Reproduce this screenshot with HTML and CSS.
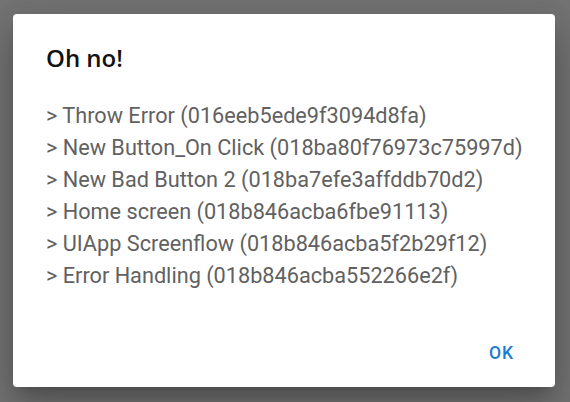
FILE: index.html
```html
<!DOCTYPE html>
<html lang="en">
<head>
    <meta charset="UTF-8">
    <meta name="viewport" content="width=device-width, initial-scale=1.0">
    <title>Oh no!</title>
    <link rel="stylesheet" href="styles.css">
</head>
<body>
    <div class="dialog">
        <h2 class="dialog-title">Oh no!</h2>
        <div class="dialog-content">
            <div class="trace-line">&gt; Throw Error (016eeb5ede9f3094d8fa)</div>
            <div class="trace-line">&gt; New Button_On Click (018ba80f76973c75997d)</div>
            <div class="trace-line">&gt; New Bad Button 2 (018ba7efe3affddb70d2)</div>
            <div class="trace-line">&gt; Home screen (018b846acba6fbe91113)</div>
            <div class="trace-line">&gt; UIApp Screenflow (018b846acba5f2b29f12)</div>
            <div class="trace-line">&gt; Error Handling (018b846acba552266e2f)</div>
        </div>
        <div class="dialog-actions">
            <button class="ok-button">OK</button>
        </div>
    </div>
</body>
</html>
```

FILE: styles.css
```css
body {
    margin: 0;
    height: 402px;
    background-color: #747474;
    padding: 14px 15px 15px 13px;
    box-sizing: border-box;
    font-family: Roboto, "Liberation Sans", sans-serif;
}
.dialog {
    background-color: #fff;
    border-radius: 4px;
    box-shadow: 0 11px 15px -7px rgba(0, 0, 0, 0.2), 0 24px 38px 3px rgba(0, 0, 0, 0.14), 0 9px 46px 8px rgba(0, 0, 0, 0.12);
    height: 373px;
    display: flex;
    flex-direction: column;
    box-sizing: border-box;
}
.dialog-title {
    margin: 0;
    padding: 28px 33px 0;
    font-family: "Open Sans", sans-serif;
    font-size: 24px;
    font-weight: 600;
    line-height: 32px;
    color: #111;
}
.dialog-content {
    padding: 26px 24px 0 33px;
    flex: 1;
}
.trace-line {
    font-size: 21.7px;
    line-height: 32px;
    color: #616161;
    white-space: nowrap;
}
.dialog-actions {
    display: flex;
    justify-content: flex-end;
    padding: 0 33px 16px;
}
.ok-button {
    background: none;
    border: none;
    padding: 8px 8px;
    font-family: Roboto, sans-serif;
    font-weight: 500;
    font-size: 17.5px;
    letter-spacing: 1px;
    color: #1a7ad6;
    cursor: pointer;
}
```
